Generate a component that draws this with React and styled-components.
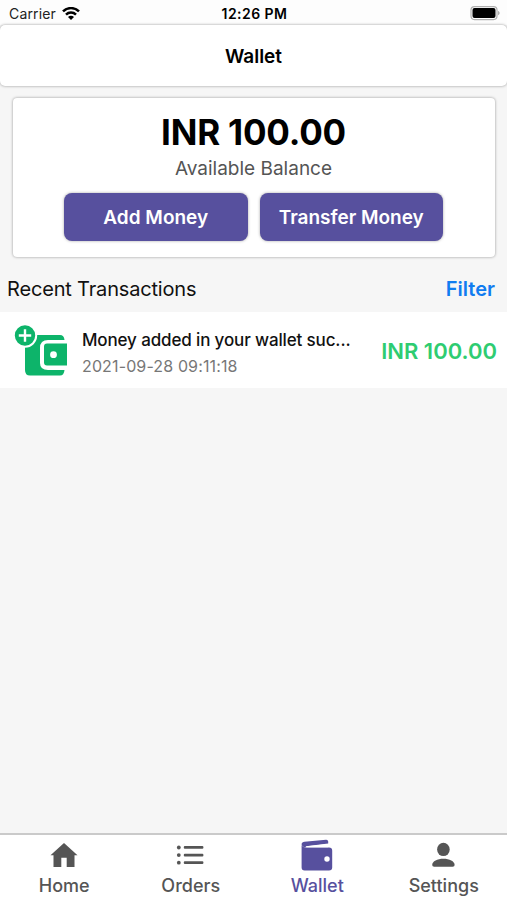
import React from 'react';
import styled, { createGlobalStyle, ThemeProvider } from 'styled-components';

const theme = {
  purple: '#57509e',
  blue: '#117cf0',
  green: '#2ecc71',
  icon: '#0db46a',
  grey: '#555555',
  page: '#f6f6f6',
};

const GlobalStyle = createGlobalStyle`
  * {
    box-sizing: border-box;
  }
  body {
    margin: 0;
    background: ${theme.page};
    font-family: Inter, 'Liberation Sans', sans-serif;
    color: #000;
  }
  button {
    font-family: inherit;
    border: 0;
    padding: 0;
    background: none;
  }
`;

const Screen = styled.div`
  width: 507px;
  height: 900px;
  display: flex;
  flex-direction: column;
  overflow: hidden;
  background: ${({ theme }) => theme.page};
`;

const Text = styled.span`
  display: block;
  white-space: nowrap;
  font-size: ${({ $size }) => $size}px;
  line-height: ${({ $line }) => $line}px;
  font-weight: ${({ $weight }) => $weight || 400};
  letter-spacing: ${({ $track }) => $track || 0}px;
  color: ${({ $color }) => $color || 'inherit'};
`;

const StatusBar = styled.div`
  flex: none;
  height: 25px;
  padding: 2px 7px 0 9px;
  display: grid;
  grid-template-columns: 1fr auto 1fr;
  align-items: center;
  background: #fdfdfd;
`;

const Carrier = styled.div`
  display: flex;
  align-items: center;
  gap: 6px;
`;

const BatteryIcon = styled.svg`
  justify-self: end;
`;

const Header = styled.header`
  flex: none;
  height: 61px;
  padding-top: 2px;
  display: flex;
  align-items: center;
  justify-content: center;
  border-radius: 5px;
  background: #fff;
  box-shadow: 0 0 3px rgba(0, 0, 0, 0.4);
`;

const Card = styled.section`
  flex: none;
  height: 159px;
  margin: 12px 12px 0 13px;
  padding: 14px 1px 0 0;
  display: flex;
  flex-direction: column;
  align-items: center;
  border-radius: 4px;
  background: #fff;
  box-shadow: 0 0 3px rgba(0, 0, 0, 0.4);
`;

const Actions = styled.div`
  display: flex;
  gap: 12px;
  margin-top: 7px;
`;

const ActionButton = styled.button`
  width: 183.5px;
  height: 48px;
  padding-top: 2px;
  display: flex;
  align-items: center;
  justify-content: center;
  border-radius: 8px;
  color: #fff;
  background: ${({ theme }) => theme.purple};
  box-shadow: 0 0 3px rgba(0, 0, 0, 0.35);
`;

const ListHeader = styled.div`
  flex: none;
  height: 55px;
  padding: 8px 12px 0 7px;
  display: flex;
  align-items: center;
  justify-content: space-between;
`;

const Transaction = styled.div`
  flex: none;
  height: 76px;
  padding: 1px 10px 0 14px;
  display: flex;
  align-items: center;
  background: #fff;
`;

const Details = styled.div`
  flex: 1;
  margin-left: 14px;
  padding-top: 6px;
`;

const TabBar = styled.nav`
  flex: none;
  height: 67px;
  margin-top: auto;
  padding-left: 1px;
  display: grid;
  grid-template-columns: repeat(4, 1fr);
  border-top: 2px solid #cacaca;
  background: #fff;
`;

const Tab = styled.button`
  display: flex;
  flex-direction: column;
  align-items: center;
  color: ${({ theme, $active }) => ($active ? theme.purple : theme.grey)};
`;

const TabIcon = styled.svg`
  width: 36px;
  height: 36px;
  margin: 2px 0 1px;
  fill: currentColor;
`;

const WifiIcon = () => (
  <svg width="18" height="14" viewBox="0 0 18 14" fill="none" stroke="#000" strokeWidth="2.5">
    <path d="M1 4.4C5.3 0 12.7 0 17 4.4" />
    <path d="M4 7.6C6.8 4.8 11.2 4.8 14 7.6" />
    <path d="M9 13L6 9.9C7.6 8.3 10.4 8.3 12 9.9Z" fill="#000" stroke="none" />
  </svg>
);

const Battery = () => (
  <BatteryIcon width="30" height="15" viewBox="0 0 30 15">
    <rect x="1" y="0.6" width="26" height="13" rx="3.5" fill="#fff" stroke="#b0b0b0" strokeWidth="1.2" />
    <rect x="2.5" y="2.1" width="23" height="10" rx="2" fill="#000" />
    <path d="M28 4.9c2.2.7 2.2 3.7 0 4.4z" fill="#b0b0b0" />
  </BatteryIcon>
);

const WalletAddIcon = () => (
  <svg width="54" height="52" viewBox="0 0 54 52">
    <path
      fill={theme.icon}
      d="M15 10H46Q50 10 50.5 15H34Q26 15 26 23V38Q26 45 34 45H50.5Q50 50.5 46 50.5H16Q11 50.5 11 45V14Z"
    />
    <path
      fill={theme.icon}
      fillRule="evenodd"
      d="M33 18.5H53V40.5H33Q30 40.5 30 37.5V21.5Q30 18.5 33 18.5ZM39.5 26.3a3.4 3.4 0 1 0 0 6.8a3.4 3.4 0 0 0 0-6.8Z"
    />
    <circle cx="11" cy="10.5" r="11.2" fill={theme.icon} stroke="#fff" strokeWidth="2" />
    <path d="M11 4.3V16.7M4.8 10.5H17.2" stroke="#fff" strokeWidth="2.4" />
  </svg>
);

const icons = {
  home: <path d="M18 6L31.5 18.3H28.5V30H20.7V20.8H15.3V30H7.5V18.3H4.5Z" />,
  orders: (
    <>
      <circle cx="5.8" cy="10.5" r="1.9" />
      <circle cx="5.8" cy="18.1" r="1.9" />
      <circle cx="5.8" cy="25.7" r="1.9" />
      <rect x="10.8" y="9.1" width="19.6" height="2.7" rx="1" />
      <rect x="10.8" y="16.7" width="19.6" height="2.7" rx="1" />
      <rect x="10.8" y="24.3" width="19.6" height="2.7" rx="1" />
    </>
  ),
  wallet: (
    <>
      <path d="M6.5 10.2C3.9 10.2 2.6 8.8 2.6 7.3C2.6 5.8 4 5 5.5 4.8L27 2.7Q29 2.5 29.2 4.5V6.5L7 9.3Z" />
      <path
        fillRule="evenodd"
        d="M2.6 8.2Q4 10.6 7 10.6H30Q33.2 10.6 33.2 13.6V30.5Q33.2 33.5 30 33.5H5.6Q2.6 33.5 2.6 30.5ZM28 19.3a2.7 2.7 0 1 0 0 5.4a2.7 2.7 0 0 0 0-5.4Z"
      />
      <path d="M7.5 9.3L29.2 6.9V10.2H7.5Z" fill="#fff" />
    </>
  ),
  settings: (
    <>
      <ellipse cx="17.4" cy="12.4" rx="6.3" ry="6.7" />
      <path d="M6.2 28C6.2 24.3 11.4 21.8 17.4 21.8S28.6 24.3 28.6 28Q28.6 29.8 26.6 29.8H8.2Q6.2 29.8 6.2 28Z" />
    </>
  ),
};

const tabs = [
  { id: 'home', label: 'Home' },
  { id: 'orders', label: 'Orders' },
  { id: 'wallet', label: 'Wallet', active: true },
  { id: 'settings', label: 'Settings' },
];

const App = () => (
  <ThemeProvider theme={theme}>
    <GlobalStyle />
    <Screen>
      <StatusBar>
        <Carrier>
          <Text $size={14} $line={18} $track={0.15} $color="#222">Carrier</Text>
          <WifiIcon />
        </Carrier>
        <Text $size={14} $line={18} $weight={600} $track={0.45}>12:26 PM</Text>
        <Battery />
      </StatusBar>

      <Header>
        <Text $size={19} $line={24} $weight={600}>Wallet</Text>
      </Header>

      <Card>
        <Text $size={35} $line={40} $weight={700} $track={-0.2}>INR 100.00</Text>
        <Text $size={19} $line={34} $color={theme.grey}>Available Balance</Text>
        <Actions>
          <ActionButton>
            <Text $size={19} $line={24} $weight={600}>Add Money</Text>
          </ActionButton>
          <ActionButton>
            <Text $size={19} $line={24} $weight={600}>Transfer Money</Text>
          </ActionButton>
        </Actions>
      </Card>

      <ListHeader>
        <Text $size={20} $line={26} $track={-0.17} $color="#111">Recent Transactions</Text>
        <Text $size={20} $line={26} $weight={600} $color={theme.blue}>Filter</Text>
      </ListHeader>

      <Transaction>
        <WalletAddIcon />
        <Details>
          <Text $size={17} $line={26} $weight={500} $track={-0.14} $color="#111">Money added in your wallet suc...</Text>
          <Text $size={16} $line={27} $track={0.13} $color="#777">2021-09-28 09:11:18</Text>
        </Details>
        <Text $size={22} $line={26} $weight={600} $color={theme.green}>INR 100.00</Text>
      </Transaction>

      <TabBar>
        {tabs.map(({ id, label, active }) => (
          <Tab key={id} $active={active}>
            <TabIcon viewBox="0 0 36 36">{icons[id]}</TabIcon>
            <Text $size={18} $line={24} $weight={500}>{label}</Text>
          </Tab>
        ))}
      </TabBar>
    </Screen>
  </ThemeProvider>
);

export default App;
